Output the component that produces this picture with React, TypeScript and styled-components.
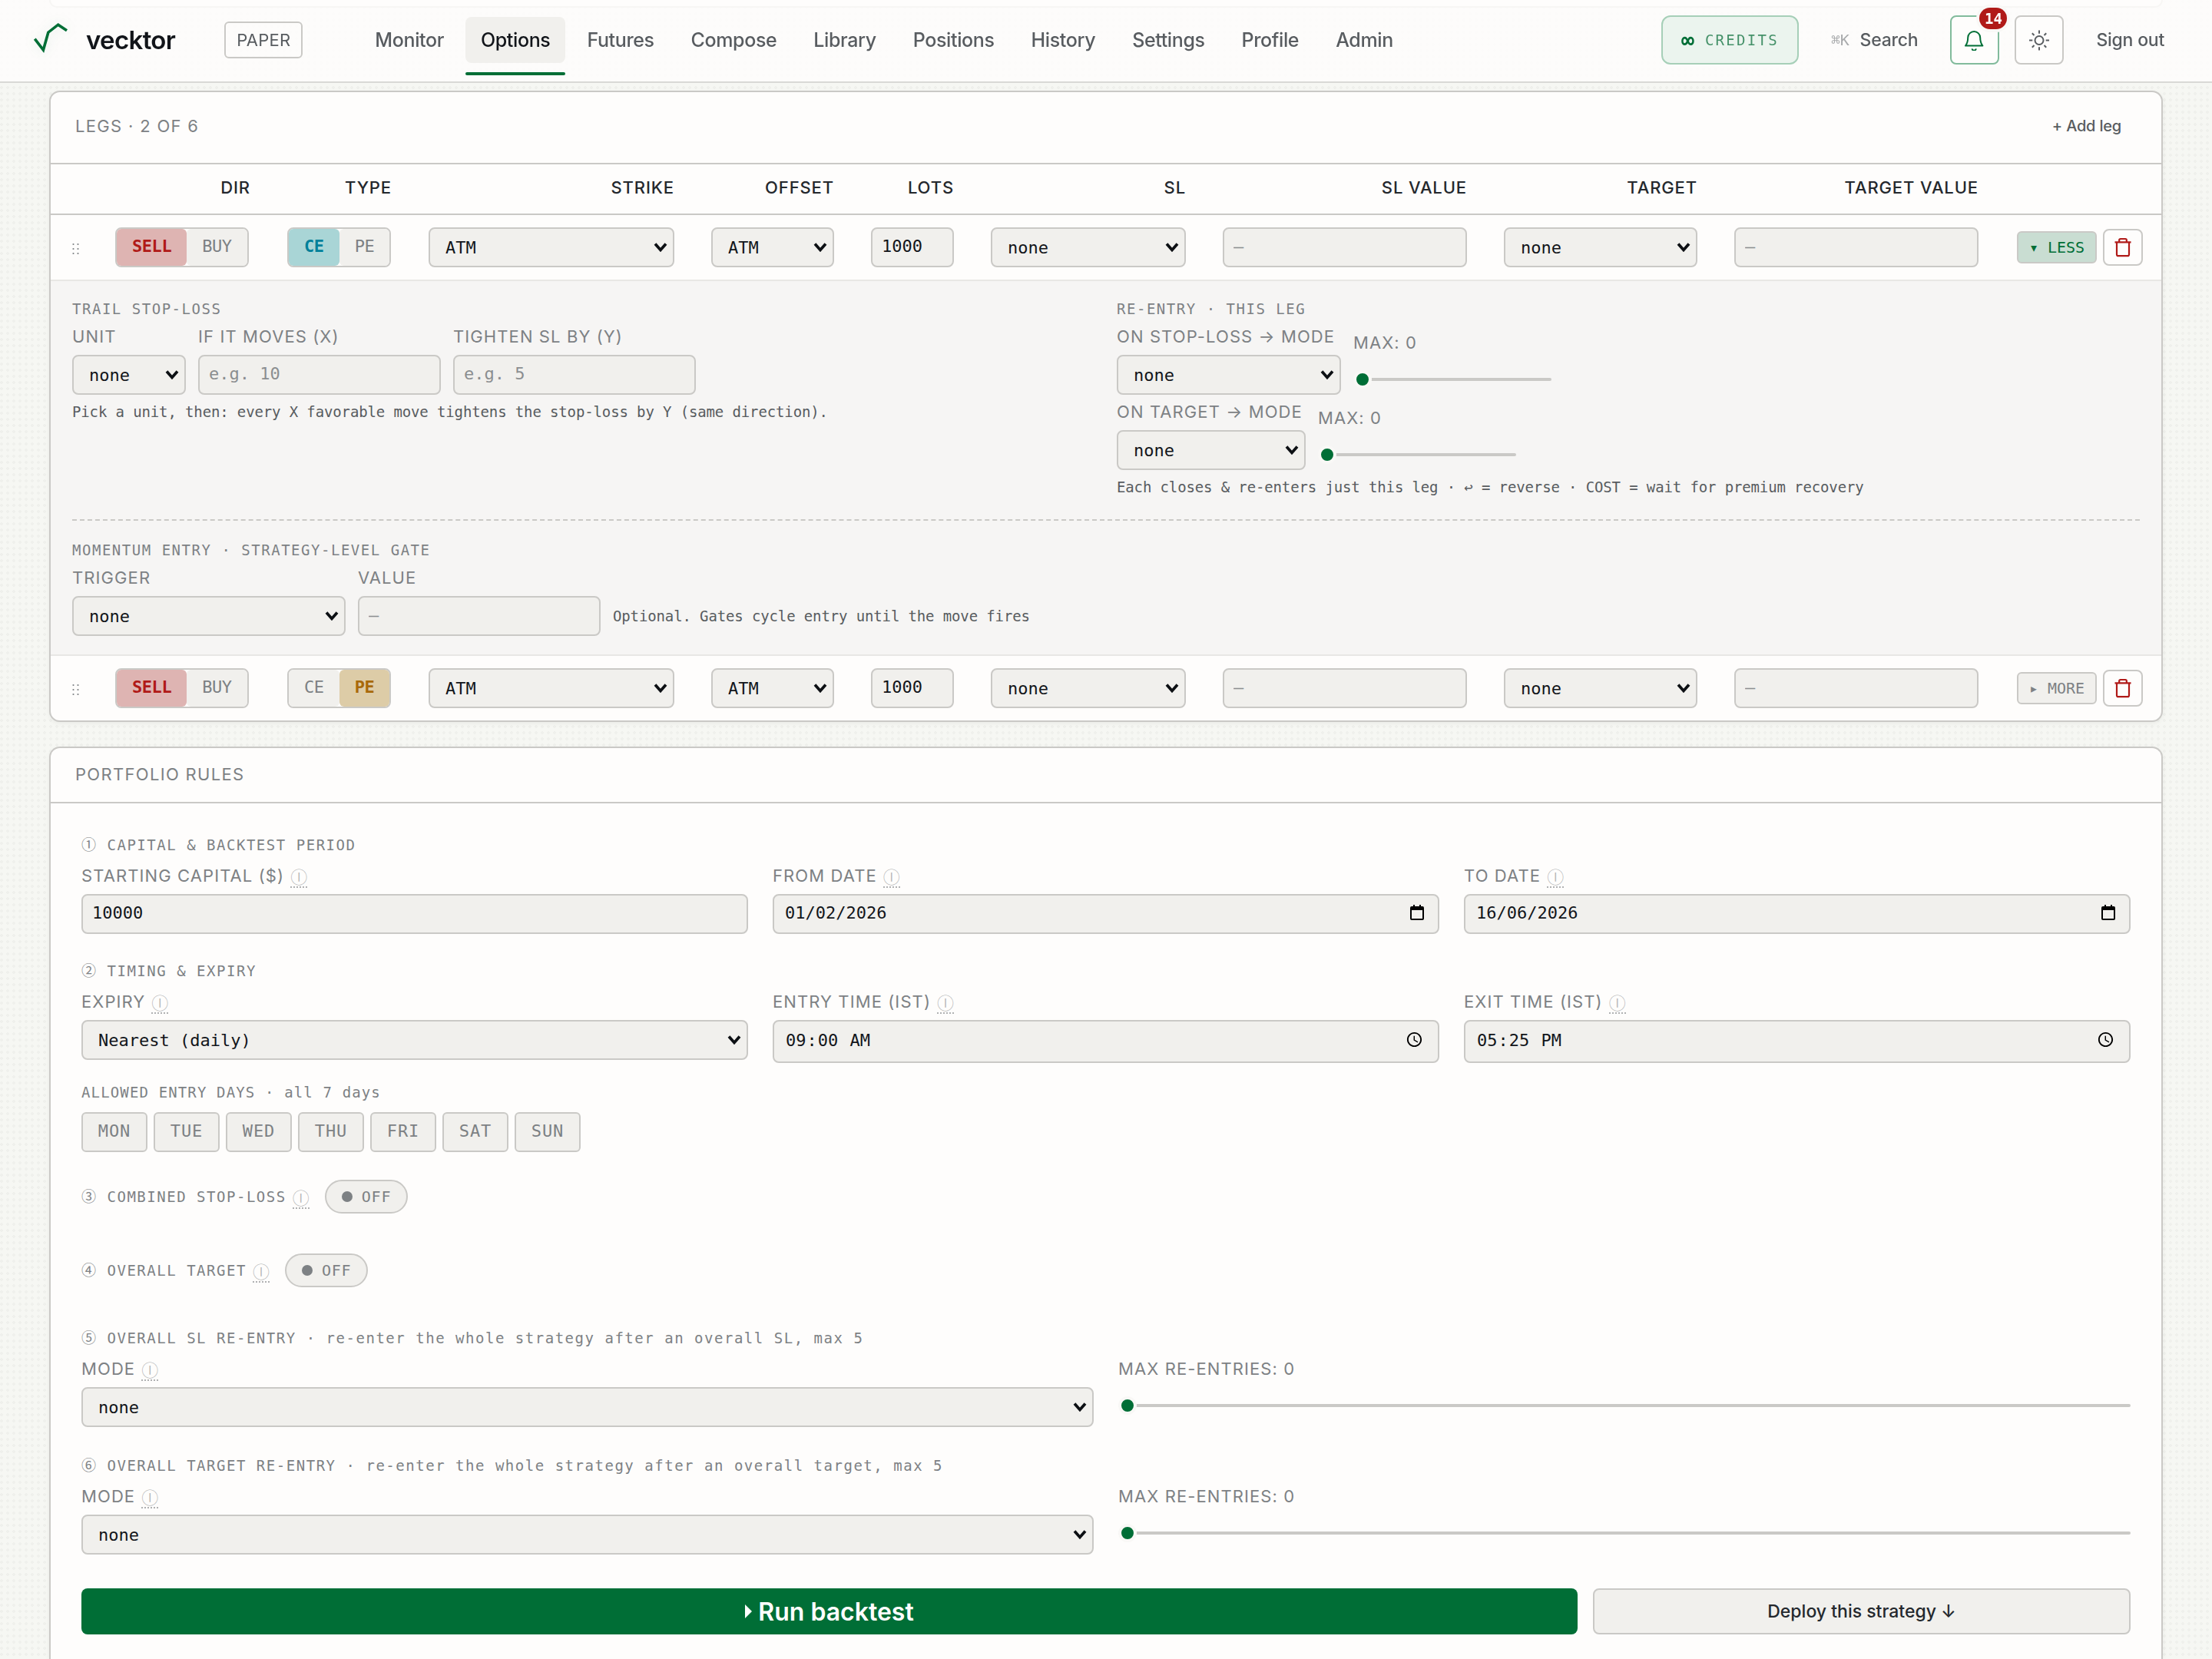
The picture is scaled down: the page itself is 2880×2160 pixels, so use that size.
import React, { useId, useState } from "react";
import styled, { createGlobalStyle, css } from "styled-components";

const color = {
  page: "#f6f7f3",
  surface: "#fefdfc",
  inset: "#f6f5f4",
  field: "#f1f0ed",
  line: "#cac9c6",
  lineSoft: "#e8e7e5",
  ink: "#12151a",
  inkSoft: "#24282d",
  text: "#585c60",
  muted: "#7d8184",
  faint: "#b0b1b2",
  green: "#006e36",
  red: "#b01a18",
};

const sans = `Inter, "Noto Sans CJK JP", sans-serif`;
const mono = `"DejaVu Sans Mono", "Noto Sans CJK JP", monospace`;

const chevron = `url("data:image/svg+xml,%3Csvg xmlns='http://www.w3.org/2000/svg' width='18' height='12' viewBox='0 0 18 12'%3E%3Cpath d='M2 1.6 9 9.4 16 1.6' fill='none' stroke='%230d1014' stroke-width='3.8'/%3E%3C/svg%3E")`;

const GlobalStyle = createGlobalStyle`
  *, *::before, *::after { box-sizing: border-box; }
  body {
    margin: 0;
    background-color: ${color.page};
    background-image: radial-gradient(circle at 2px 2px, #eff0ec 2px, transparent 2px);
    background-size: 8px 8px;
    color: ${color.ink};
    font-family: ${sans};
    font-size: 26px;
    letter-spacing: -0.005em;
  }
  button, input, select { font: inherit; color: inherit; }
  button { cursor: pointer; }
`;

/* ---------- shell ---------- */

const Page = styled.div`
  display: flex;
  flex-direction: column;
  min-height: 100vh;
`;

const Header = styled.header`
  position: fixed;
  inset: 0 0 auto;
  z-index: 2;
  display: flex;
  align-items: center;
  gap: 64px;
  padding: 20px 40px 22px;
  border-bottom: 2px solid #d9d9d6;
  background: rgba(254, 253, 251, 0.86);
`;

const Brand = styled.a`
  display: flex;
  align-items: center;
  gap: 20px;
  color: ${color.ink};
  font-size: 33px;
  font-weight: 600;
  letter-spacing: -0.02em;
  text-decoration: none;

  svg {
    filter: drop-shadow(0 0 8px rgba(0, 110, 54, 0.12));
  }
`;

const Mode = styled.span`
  padding: 0 14px;
  border: 2px solid ${color.line};
  border-radius: 6px;
  color: ${color.text};
  font-size: 22px;
  letter-spacing: 0.01em;
  line-height: 44px;
`;

const Nav = styled.nav`
  display: flex;
  flex: 1;
  gap: 8px;
  padding-left: 10px;
`;

const NavLink = styled.a<{ $active?: boolean }>`
  position: relative;
  padding: 0 20px;
  border-radius: 8px;
  color: ${(p) => (p.$active ? color.ink : color.text)};
  background: ${(p) => (p.$active ? color.field : "transparent")};
  font-size: 25px;
  font-weight: 500;
  letter-spacing: -0.015em;
  line-height: 60px;
  text-decoration: none;

  ${(p) =>
    p.$active &&
    css`
      &::after {
        content: "";
        position: absolute;
        inset: auto 0 -16px;
        height: 4px;
        border-radius: 2px;
        background: ${color.green};
      }
    `}
`;

const Tools = styled.div`
  display: flex;
  align-items: center;
  gap: 20px;
`;

const Credits = styled.button`
  display: flex;
  align-items: center;
  gap: 14px;
  height: 64px;
  padding: 0 24px;
  border: 2px solid #a6cfb8;
  border-radius: 12px;
  background: #ebf4ee;
  color: #459169;
  font-family: ${mono};
  font-size: 19px;
  letter-spacing: 0.12em;

  b {
    color: ${color.green};
    font-size: 28px;
    letter-spacing: 0;
  }
`;

const PlainButton = styled.button<{ $small?: boolean }>`
  display: flex;
  align-items: center;
  gap: 14px;
  height: ${(p) => (p.$small ? 52 : 64)}px;
  padding: 0 ${(p) => (p.$small ? 20 : 22)}px;
  border: 0;
  background: none;
  color: ${color.text};
  font-size: ${(p) => (p.$small ? 20 : 23)}px;
  font-weight: 500;
  letter-spacing: -0.01em;

  kbd {
    color: #a9abad;
    font-family: ${mono};
    font-size: 20px;
  }
`;

const IconButton = styled.button<{ $alert?: boolean }>`
  position: relative;
  display: grid;
  place-items: center;
  width: 64px;
  height: 64px;
  padding: 0;
  border: 2px solid ${(p) => (p.$alert ? "#82bb9c" : color.line)};
  border-radius: 8px;
  background: ${color.surface};
  color: ${(p) => (p.$alert ? color.green : color.text)};
`;

const Badge = styled.span`
  position: absolute;
  top: -12px;
  right: -12px;
  min-width: 36px;
  padding: 0 6px;
  border-radius: 14px;
  background: ${color.red};
  box-shadow: 0 0 0 4px #f9f8f6;
  color: #fff;
  font-family: ${mono};
  font-size: 19px;
  font-weight: 700;
  line-height: 28px;
`;

const Main = styled.main`
  display: flex;
  flex: 1;
  flex-direction: column;
  padding: 0 64px;
`;

const PreviousPanel = styled.div`
  height: 10px;
  margin-bottom: 108px;
  border: 2px solid ${color.line};
  border-top: 0;
  border-radius: 0 0 16px 16px;
  background: ${color.surface};
`;

const Panel = styled.section<{ $continues?: boolean }>`
  border: 2px solid ${color.line};
  border-radius: 14px;
  background: ${color.surface};
  box-shadow: 0 2px 6px rgba(20, 20, 10, 0.05);

  & + & {
    margin-top: 32px;
  }

  ${(p) =>
    p.$continues &&
    css`
      flex: 1;
      border-bottom: 0;
      border-radius: 14px 14px 0 0;
    `}
`;

const PanelHead = styled.header`
  display: flex;
  align-items: center;
  justify-content: space-between;
  min-height: 72px;
  padding: 0 32px 2px;
  border-bottom: 2px solid ${color.line};
`;

const LegsHead = styled(PanelHead)`
  min-height: 94px;
  padding-bottom: 4px;
`;

const PanelTitle = styled.h2`
  margin: 0;
  color: ${color.muted};
  font-size: 22px;
  font-weight: 400;
  letter-spacing: 0.06em;
  line-height: 24px;
`;

/* ---------- form parts ---------- */

const control = css`
  width: 100%;
  height: 52px;
  border: 2px solid ${color.line};
  border-radius: 8px;
  background-color: ${color.field};
  color: ${color.ink};
  font-family: ${mono};
  font-size: 22px;
  letter-spacing: 0;
`;

const Select = styled.select`
  ${control}
  display: block;
  padding: 0 32px 0 20px;
  appearance: none;
  background-image: ${chevron};
  background-position: right 7px center;
  background-repeat: no-repeat;
`;

const Input = styled.input`
  ${control}
  display: block;
  padding: 0 12px 4px;

  &::placeholder {
    color: #8b8e90;
    opacity: 1;
  }
`;

const TimeInput = styled(Input)`
  height: 56px;
  padding: 0 16px 4px 14px;
`;

const DateBox = styled.div`
  ${control}
  display: flex;
  align-items: center;
  padding: 0 18px 4px 14px;

  input {
    flex: 1;
    min-width: 0;
    padding: 0;
    border: 0;
    background: none;
    letter-spacing: inherit;
  }

  button {
    display: grid;
    padding: 0;
    border: 0;
    background: none;
  }
`;

const Field = styled.div<{ $width?: number }>`
  display: flex;
  flex-direction: column;
  gap: 12px;
  min-width: 0;
  width: ${(p) => (p.$width ? `${p.$width}px` : "auto")};
`;

const Label = styled.label`
  color: ${color.muted};
  font-size: 22px;
  letter-spacing: 0.05em;
  line-height: 24px;
  white-space: nowrap;
`;

const Info = styled.abbr`
  display: inline-block;
  height: 28px;
  margin: 0 0 -4px 8px;
  border-bottom: 2px dotted ${color.faint};
  color: ${color.faint};
  font-family: "Noto Sans CJK JP", sans-serif;
  font-size: 22px;
  font-weight: 300;
  letter-spacing: 0;
  line-height: 24px;
  text-decoration: none;
  vertical-align: top;
`;

const Range = styled.input`
  display: block;
  width: 100%;
  height: 40px;
  margin: 4px 0 0;
  appearance: none;
  background: none;

  &::-webkit-slider-runnable-track {
    height: 4px;
    border-radius: 2px;
    background: ${color.line};
  }

  &::-webkit-slider-thumb {
    width: 24px;
    height: 24px;
    margin-top: -10px;
    appearance: none;
    border: 4px solid #f9f8f6;
    border-radius: 50%;
    background: ${color.green};
  }
`;

const Eyebrow = styled.h3<{ $tight?: boolean }>`
  margin: 0;
  color: ${color.muted};
  font-family: ${mono};
  font-size: 19px;
  font-weight: 400;
  letter-spacing: ${(p) => (p.$tight ? "0.06em" : "0.08em")};
  line-height: 24px;
`;

const Step = styled.span`
  font-family: "Noto Sans CJK JP", sans-serif;
  font-size: 19px;
  line-height: 20px;
`;

const Hint = styled.p`
  margin: 0;
  color: ${color.text};
  font-family: ${mono};
  font-size: 19px;
  line-height: 24px;
`;

/* ---------- legs table ---------- */

const Table = styled.table`
  width: 100%;
  border-collapse: separate;
  border-spacing: 0;
  table-layout: fixed;
`;

const HeadCell = styled.th`
  height: 66px;
  padding: 0 24px 4px;
  border-bottom: 2px solid ${color.line};
  color: ${color.inkSoft};
  font-size: 22px;
  font-weight: 500;
  letter-spacing: 0.04em;
  text-align: right;
  white-space: nowrap;
`;

const Cell = styled.td`
  padding: 16px 24px;
`;

const GripCell = styled(Cell)`
  padding: 0 0 0 28px;
  color: ${color.muted};
`;

const ActionCell = styled(Cell)`
  padding: 0 0 0 26px;
`;

const Actions = styled.div`
  display: flex;
  align-items: center;
  gap: 8px;
`;

const tones = {
  sell: ["#deb4b2", "#b01a18"],
  call: ["#a9d5d6", "#00809a"],
  put: ["#ddcca7", "#a8690a"],
};
type Tone = keyof typeof tones;

const Segments = styled.div`
  display: flex;
  width: max-content;
  height: 52px;
  border: 2px solid ${color.line};
  border-radius: 8px;
  background: ${color.surface};
`;

const Segment = styled.button<{ $tone?: Tone }>`
  padding: 0 20px 4px;
  border: 0;
  border-radius: 6px;
  background: ${(p) => (p.$tone ? tones[p.$tone][0] : color.field)};
  color: ${(p) => (p.$tone ? tones[p.$tone][1] : color.muted)};
  font-family: ${mono};
  font-size: 22px;
  font-weight: ${(p) => (p.$tone ? 700 : 400)};
  letter-spacing: -0.02em;
`;

const MoreButton = styled.button<{ $open: boolean }>`
  width: 104px;
  height: 42px;
  padding: 0;
  border: 2px solid ${color.line};
  border-radius: 6px;
  background: ${(p) => (p.$open ? "#c9ddd2" : color.field)};
  color: ${(p) => (p.$open ? color.green : color.muted)};
  font-family: ${mono};
  font-size: 20px;
`;

const TrashButton = styled.button`
  display: grid;
  place-items: center;
  width: 52px;
  height: 48px;
  padding: 0;
  border: 2px solid ${color.line};
  border-radius: 8px;
  background: ${color.surface};
  color: ${color.red};
`;

const DetailCell = styled.td`
  padding: 24px 28px;
  border-top: 2px solid ${color.lineSoft};
  border-bottom: 2px solid ${color.lineSoft};
  background: ${color.inset};
`;

const DetailColumns = styled.div`
  display: grid;
  grid-template-columns: 1fr 1fr;
  gap: 28px;
  padding-bottom: 30px;
  border-bottom: 2px dashed ${color.line};
`;

const Stack = styled.div`
  display: flex;
  flex-direction: column;
  gap: 10px;
`;

const Group = styled.div<{ $top?: number }>`
  display: flex;
  flex-direction: column;
  gap: 12px;
  padding-top: ${(p) => p.$top ?? 0}px;
`;

const FieldRow = styled.div`
  display: flex;
  align-items: flex-end;
  gap: 16px;

  ${Hint} {
    line-height: 52px;
  }
`;

/* ---------- portfolio rules ---------- */

const Rules = styled.div`
  display: flex;
  flex-direction: column;
  gap: 36px;
  padding: 42px 40px 32px;
`;

const Rule = styled.section`
  display: flex;
  flex-direction: column;
  gap: 16px;
`;

const ReentryRule = styled(Rule)`
  padding-top: 2px;
`;

const ToggleRule = styled.section`
  display: flex;
  align-items: center;
  gap: 20px;
  height: 44px;
  margin-bottom: 16px;
`;

const FieldGrid = styled.div<{ $columns: number }>`
  display: grid;
  grid-template-columns: repeat(${(p) => p.$columns}, minmax(0, 1fr));
  gap: 32px;
  align-items: start;
`;

const Pill = styled.button`
  display: flex;
  align-items: center;
  gap: 12px;
  height: 44px;
  padding: 0 20px;
  border: 2px solid ${color.line};
  border-radius: 22px;
  background: ${color.field};
  color: ${color.muted};
  font-family: ${mono};
  font-size: 20px;
  letter-spacing: 0.04em;

  &::before {
    content: "";
    width: 14px;
    height: 14px;
    border-radius: 50%;
    background: ${color.muted};
  }
`;

const DaysBlock = styled.div`
  display: flex;
  flex-direction: column;
  gap: 14px;
  padding-top: 10px;
`;

const Days = styled.div`
  display: flex;
  gap: 8px;
`;

const Day = styled.button`
  width: 86px;
  height: 52px;
  padding: 0 0 4px;
  border: 2px solid ${color.line};
  border-radius: 6px;
  background: ${color.field};
  color: ${color.muted};
  font-family: ${mono};
  font-size: 22px;
  letter-spacing: 0.04em;
`;

const Footer = styled.div`
  display: grid;
  grid-template-columns: minmax(0, 1fr) 700px;
  gap: 20px;
  padding-top: 8px;
`;

const RunButton = styled.button`
  display: flex;
  align-items: center;
  justify-content: center;
  gap: 8px;
  height: 60px;
  border: 0;
  border-radius: 8px;
  background: ${color.green};
  color: #fff;
  font-size: 32px;
  font-weight: 600;
`;

const DeployButton = styled.button`
  height: 60px;
  border: 2px solid ${color.line};
  border-radius: 8px;
  background: ${color.field};
  color: ${color.inkSoft};
  font-size: 23px;
  font-weight: 500;
`;

/* ---------- icons ---------- */

const LogoMark = () => (
  <svg width="52" height="52" viewBox="0 0 52 52" fill="none" stroke={color.green} strokeWidth="3.6" aria-hidden="true">
    <path d="M5.3 24.6 16.4 39 22.8 16.2 35.7 6.2 47 13.8" />
  </svg>
);

const BellIcon = () => (
  <svg width="28" height="28" viewBox="0 0 28 28" fill="none" stroke="currentColor" strokeWidth="2" strokeLinejoin="round" strokeLinecap="round" aria-hidden="true">
    <path d="M2 21.6h22.4c-1.8-2.3-3.2-4.6-3.2-10.6a8 8 0 0 0-16 0c0 6-1.4 8.3-3.2 10.6Z" />
    <path d="M10.8 26.2a2.6 2.6 0 0 0 4.8 0" />
  </svg>
);

const SunIcon = () => (
  <svg width="28" height="28" viewBox="0 0 28 28" fill="none" stroke="currentColor" strokeWidth="2" aria-hidden="true">
    <circle cx="14" cy="14.5" r="5.5" />
    <path d="M14 1.5v4.3M14 23.2v4.3M1 14.5h4.3M22.7 14.5H27M4.8 5.3l2.7 2.7M20.5 21l2.7 2.7M23.2 5.3 20.5 8M7.5 21l-2.7 2.7" />
  </svg>
);

const TrashIcon = () => (
  <svg width="24" height="26" viewBox="0 0 24 26" fill="none" stroke="currentColor" strokeWidth="2.2" aria-hidden="true">
    <path d="M1.5 6.3h21M7.2 6.3V3.6c0-1 .6-1.6 1.6-1.6h6.4c1 0 1.6.6 1.6 1.6v2.7M4 6.3v15.9c0 1.2.8 2 2 2h12c1.2 0 2-.8 2-2V6.3" />
  </svg>
);

const GripIcon = () => (
  <svg width="10" height="16" viewBox="0 0 10 16" fill="currentColor" aria-hidden="true">
    {[2, 8, 14].map((y) => (
      <React.Fragment key={y}>
        <circle cx="1.5" cy={y} r="1.1" />
        <circle cx="7.5" cy={y} r="1.1" />
      </React.Fragment>
    ))}
  </svg>
);

const CalendarIcon = () => (
  <svg width="18" height="20" viewBox="0 0 18 20" fill="none" stroke="#000" strokeWidth="2" aria-hidden="true">
    <rect x="1" y="3" width="16" height="16" rx="1" />
    <path d="M1 5h16" strokeWidth="4" />
    <path d="M5 0v4M13 0v4" />
  </svg>
);

const PlayIcon = () => (
  <svg width="9" height="18" viewBox="0 0 9 18" fill="currentColor" aria-hidden="true">
    <path d="M0 0 9 9 0 18Z" />
  </svg>
);

/* ---------- composed fields ---------- */

const InfoMark = ({ title }: { title: string }) => <Info title={title}>Ⓘ</Info>;

type FieldProps = { label: string; info?: boolean; width?: number };

function LabelledField({ label, info, width, children }: FieldProps & { children: (id: string) => React.ReactNode }) {
  const id = useId();
  return (
    <Field $width={width}>
      <Label htmlFor={id}>
        {label}
        {info && <InfoMark title={label} />}
      </Label>
      {children(id)}
    </Field>
  );
}

const SelectField = ({ value = "none", ...rest }: FieldProps & { value?: string }) => (
  <LabelledField {...rest}>
    {(id) => (
      <Select id={id}>
        <option>{value}</option>
      </Select>
    )}
  </LabelledField>
);

const TextField = ({ value, placeholder, ...rest }: FieldProps & { value?: string; placeholder?: string }) => (
  <LabelledField {...rest}>{(id) => <Input id={id} defaultValue={value} placeholder={placeholder} />}</LabelledField>
);

const DateField = ({ value, ...rest }: FieldProps & { value: string }) => (
  <LabelledField {...rest}>
    {(id) => (
      <DateBox>
        <input id={id} defaultValue={value} />
        <button type="button" aria-label={`Pick ${rest.label}`}>
          <CalendarIcon />
        </button>
      </DateBox>
    )}
  </LabelledField>
);

const TimeField = ({ value, ...rest }: FieldProps & { value: string }) => (
  <LabelledField {...rest}>{(id) => <TimeInput id={id} type="time" defaultValue={value} />}</LabelledField>
);

function RangeField({ label, width }: { label: string; width?: number }) {
  const [value, setValue] = useState(0);
  return (
    <LabelledField label={`${label}: ${value}`} width={width}>
      {(id) => <Range id={id} type="range" min={0} max={5} value={value} onChange={(e) => setValue(+e.target.value)} />}
    </LabelledField>
  );
}

/* ---------- legs ---------- */

const columns = [
  { title: "", width: 60 },
  { title: "DIR", width: 224 },
  { title: "TYPE", width: 184 },
  { title: "STRIKE", width: 368 },
  { title: "OFFSET", width: 208 },
  { title: "LOTS", width: 156 },
  { title: "SL", width: 302 },
  { title: "SL VALUE", width: 366 },
  { title: "TARGET", width: 300 },
  { title: "TARGET VALUE", width: 366 },
  { title: "", width: 214 },
];

function CellSelect({ name, value }: { name: string; value: string }) {
  return (
    <Cell>
      <Select aria-label={name}>
        <option>{value}</option>
      </Select>
    </Cell>
  );
}

function LegDetail() {
  return (
    <tr>
      <DetailCell colSpan={columns.length}>
        <DetailColumns>
          <Group>
            <Eyebrow>TRAIL STOP-LOSS</Eyebrow>
            <Stack>
              <FieldRow>
                <SelectField label="UNIT" width={148} />
                <TextField label="IF IT MOVES (X)" placeholder="e.g. 10" width={316} />
                <TextField label="TIGHTEN SL BY (Y)" placeholder="e.g. 5" width={316} />
              </FieldRow>
              <Hint>Pick a unit, then: every X favorable move tightens the stop-loss by Y (same direction).</Hint>
            </Stack>
          </Group>
          <Group>
            <Eyebrow>RE-ENTRY · THIS LEG</Eyebrow>
            <Stack>
              <FieldRow>
                <SelectField label="ON STOP-LOSS → MODE" width={292} />
                <RangeField label="MAX" width={258} />
              </FieldRow>
              <FieldRow>
                <SelectField label="ON TARGET → MODE" width={246} />
                <RangeField label="MAX" width={258} />
              </FieldRow>
              <Hint>Each closes &amp; re-enters just this leg · ↩ = reverse · COST = wait for premium recovery</Hint>
            </Stack>
          </Group>
        </DetailColumns>
        <Group $top={26}>
          <Eyebrow>MOMENTUM ENTRY · STRATEGY-LEVEL GATE</Eyebrow>
          <FieldRow>
            <SelectField label="TRIGGER" width={356} />
            <TextField label="VALUE" placeholder="—" width={316} />
            <Hint>Optional. Gates cycle entry until the move fires</Hint>
          </FieldRow>
        </Group>
      </DetailCell>
    </tr>
  );
}

function Leg({ type, initiallyOpen = false }: { type: "CE" | "PE"; initiallyOpen?: boolean }) {
  const [open, setOpen] = useState(initiallyOpen);
  return (
    <>
      <tr>
        <GripCell>
          <GripIcon />
        </GripCell>
        <Cell>
          <Segments>
            <Segment $tone="sell">SELL</Segment>
            <Segment>BUY</Segment>
          </Segments>
        </Cell>
        <Cell>
          <Segments>
            <Segment $tone={type === "CE" ? "call" : undefined}>CE</Segment>
            <Segment $tone={type === "PE" ? "put" : undefined}>PE</Segment>
          </Segments>
        </Cell>
        <CellSelect name="Strike" value="ATM" />
        <CellSelect name="Offset" value="ATM" />
        <Cell>
          <Input aria-label="Lots" defaultValue="1000" />
        </Cell>
        <CellSelect name="Stop-loss" value="none" />
        <Cell>
          <Input aria-label="Stop-loss value" placeholder="—" />
        </Cell>
        <CellSelect name="Target" value="none" />
        <Cell>
          <Input aria-label="Target value" placeholder="—" />
        </Cell>
        <ActionCell>
          <Actions>
            <MoreButton $open={open} onClick={() => setOpen(!open)}>
              {open ? "▾ LESS" : "▸ MORE"}
            </MoreButton>
            <TrashButton aria-label="Remove leg">
              <TrashIcon />
            </TrashButton>
          </Actions>
        </ActionCell>
      </tr>
      {open && <LegDetail />}
    </>
  );
}

const links = ["Monitor", "Options", "Futures", "Compose", "Library", "Positions", "History", "Settings", "Profile", "Admin"];
const days = ["MON", "TUE", "WED", "THU", "FRI", "SAT", "SUN"];

export default function App() {
  return (
    <Page>
      <GlobalStyle />
      <Header>
        <Brand href="#">
          <LogoMark />
          vecktor
        </Brand>
        <Mode>PAPER</Mode>
        <Nav>
          {links.map((name) => (
            <NavLink key={name} href="#" $active={name === "Options"}>
              {name}
            </NavLink>
          ))}
        </Nav>
        <Tools>
          <Credits>
            <b>∞</b>
            CREDITS
          </Credits>
          <PlainButton>
            <kbd>⌘K</kbd>
            Search
          </PlainButton>
          <IconButton $alert aria-label="Notifications">
            <BellIcon />
            <Badge>14</Badge>
          </IconButton>
          <IconButton aria-label="Theme">
            <SunIcon />
          </IconButton>
          <PlainButton>Sign out</PlainButton>
        </Tools>
      </Header>

      <Main>
        <PreviousPanel />
        <Panel>
          <LegsHead>
            <PanelTitle>LEGS · 2 OF 6</PanelTitle>
            <PlainButton $small>+ Add leg</PlainButton>
          </LegsHead>
          <Table>
            <colgroup>
              {columns.map((column, i) => (
                <col key={i} width={column.width} />
              ))}
            </colgroup>
            <thead>
              <tr>
                {columns.map((column, i) => (
                  <HeadCell key={i}>{column.title}</HeadCell>
                ))}
              </tr>
            </thead>
            <tbody>
              <Leg type="CE" initiallyOpen />
              <Leg type="PE" />
            </tbody>
          </Table>
        </Panel>

        <Panel $continues>
          <PanelHead>
            <PanelTitle>PORTFOLIO RULES</PanelTitle>
          </PanelHead>
          <Rules>
            <Rule>
              <Eyebrow>
                <Step>①</Step> CAPITAL &amp; BACKTEST PERIOD
              </Eyebrow>
              <FieldGrid $columns={3}>
                <TextField label="STARTING CAPITAL ($)" value="10000" info />
                <DateField label="FROM DATE" value="01/02/2026" info />
                <DateField label="TO DATE" value="16/06/2026" info />
              </FieldGrid>
            </Rule>
            <Rule>
              <Eyebrow>
                <Step>②</Step> TIMING &amp; EXPIRY
              </Eyebrow>
              <FieldGrid $columns={3}>
                <SelectField label="EXPIRY" value="Nearest (daily)" info />
                <TimeField label="ENTRY TIME (IST)" value="09:00" info />
                <TimeField label="EXIT TIME (IST)" value="17:25" info />
              </FieldGrid>
              <DaysBlock>
                <Eyebrow $tight>ALLOWED ENTRY DAYS · all 7 days</Eyebrow>
                <Days>
                  {days.map((day) => (
                    <Day key={day}>{day}</Day>
                  ))}
                </Days>
              </DaysBlock>
            </Rule>
            <ToggleRule>
              <Eyebrow>
                <Step>③</Step> COMBINED STOP-LOSS
                <InfoMark title="Combined stop-loss" />
              </Eyebrow>
              <Pill>OFF</Pill>
            </ToggleRule>
            <ToggleRule>
              <Eyebrow>
                <Step>④</Step> OVERALL TARGET
                <InfoMark title="Overall target" />
              </Eyebrow>
              <Pill>OFF</Pill>
            </ToggleRule>
            <ReentryRule>
              <Eyebrow>
                <Step>⑤</Step> OVERALL SL RE-ENTRY · re-enter the whole strategy after an overall SL, max 5
              </Eyebrow>
              <FieldGrid $columns={2}>
                <SelectField label="MODE" info />
                <RangeField label="MAX RE-ENTRIES" />
              </FieldGrid>
            </ReentryRule>
            <ReentryRule>
              <Eyebrow>
                <Step>⑥</Step> OVERALL TARGET RE-ENTRY · re-enter the whole strategy after an overall target, max 5
              </Eyebrow>
              <FieldGrid $columns={2}>
                <SelectField label="MODE" info />
                <RangeField label="MAX RE-ENTRIES" />
              </FieldGrid>
            </ReentryRule>
            <Footer>
              <RunButton>
                <PlayIcon />
                Run backtest
              </RunButton>
              <DeployButton>Deploy this strategy ↓</DeployButton>
            </Footer>
          </Rules>
        </Panel>
      </Main>
    </Page>
  );
}
